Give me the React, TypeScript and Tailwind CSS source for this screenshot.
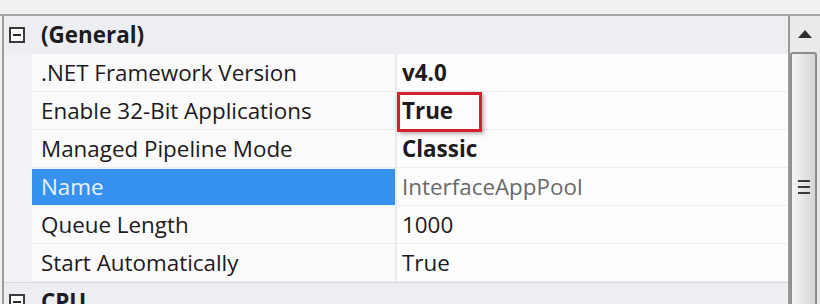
import React from "react";

type Row = { name: string; value: string; bold?: boolean; selected?: boolean; dim?: boolean; boxed?: boolean };

const rows: Row[] = [
  { name: ".NET Framework Version", value: "v4.0", bold: true },
  { name: "Enable 32-Bit Applications", value: "True", bold: true, boxed: true },
  { name: "Managed Pipeline Mode", value: "Classic", bold: true },
  { name: "Name", value: "InterfaceAppPool", selected: true, dim: true },
  { name: "Queue Length", value: "1000" },
  { name: "Start Automatically", value: "True" },
];

function MinusBox() {
  return (
    <div className="w-[16px] h-[16px] border-2 border-[#3a3a3a] flex items-center justify-center bg-white">
      <div className="w-[8px] h-[2px] bg-[#2a2a2a]" />
    </div>
  );
}

export default function App() {
  return (
    <div
      className="w-[820px] h-[304px] overflow-hidden bg-[#f2f2f2] flex flex-col text-[#1d1a20]"
      style={{ fontFamily: '"Open Sans", "Noto Sans", sans-serif' }}
    >
      <div className="h-[16px] shrink-0 bg-[#f1f1f1] border-b-2 border-[#a4a4a4]" />
      <div className="flex flex-1 min-h-0">
        <div className="flex-1 ml-[2px] border-l-2 border-[#9c9c9c] bg-[#f0f2f5] flex flex-col">
          <div className="h-[38px] shrink-0 flex items-center bg-[#eceef2]">
            <div className="w-[30px] flex pl-[5px]">
              <MinusBox />
            </div>
            <span className="ml-[7px] text-[22.4px] font-bold">(General)</span>
          </div>
          {rows.map((r) => (
            <div key={r.name} className="h-[38px] shrink-0 flex">
              <div className="w-[28px] shrink-0" />
              <div
                className={
                  r.selected
                    ? "w-[363px] shrink-0 flex items-center pl-[9px] bg-[#3791ee] text-[#e9f1fc] text-[22.4px] my-[1px]"
                    : "w-[363px] shrink-0 flex items-center pl-[9px] bg-[#fbfbfb] border-b border-[#ececec] text-[22.4px]"
                }
              >
                {r.name}
              </div>
              <div className="w-[2px] shrink-0 bg-[#ebebeb]" />
              <div className="relative flex-1 flex items-center pl-[5px] bg-[#fdfdfd] border-b border-[#eeeeee]">
                <span
                  className={
                    r.bold
                      ? "text-[22.4px] font-bold"
                      : r.dim
                      ? "text-[22.4px] text-[#6a6a6a]"
                      : "text-[22.4px]"
                  }
                >
                  {r.value}
                </span>
                {r.boxed && (
                  <div className="absolute z-10 left-[0px] top-[0px] w-[85px] h-[40px] border-[3px] border-[#d3212f] shadow-[2px_2px_4px_rgba(0,0,0,0.3)]" />
                )}
              </div>
            </div>
          ))}
          <div className="h-[38px] shrink-0 flex items-center bg-[#eceef2] border-t border-[#dadada]">
            <div className="w-[30px] flex pl-[5px]">
              <MinusBox />
            </div>
            <span className="ml-[7px] text-[22.4px] font-bold">CPU</span>
          </div>
        </div>
        <div className="w-[32px] shrink-0 border-l-2 border-[#9a9a9a] bg-[#eaeaea] flex flex-col">
          <div className="h-[36px] flex items-center justify-center">
            <svg width="14" height="8" viewBox="0 0 14 8">
              <path d="M7 0 L14 8 L0 8 Z" fill="#2e2e2e" />
            </svg>
          </div>
          <div className="flex-1 mr-[3px] border-2 border-b-0 border-[#8e8e8e] rounded-t-[3px] bg-gradient-to-r from-[#f4f4f4] via-[#e6e6e6] to-[#d4d4d4] flex flex-col items-center pt-[126px]">
            <div className="flex flex-col gap-[4px]">
              <div className="w-[12px] h-[2px] bg-[#3a3a3a]" />
              <div className="w-[12px] h-[2px] bg-[#3a3a3a]" />
              <div className="w-[12px] h-[2px] bg-[#3a3a3a]" />
            </div>
          </div>
        </div>
      </div>
    </div>
  );
}
